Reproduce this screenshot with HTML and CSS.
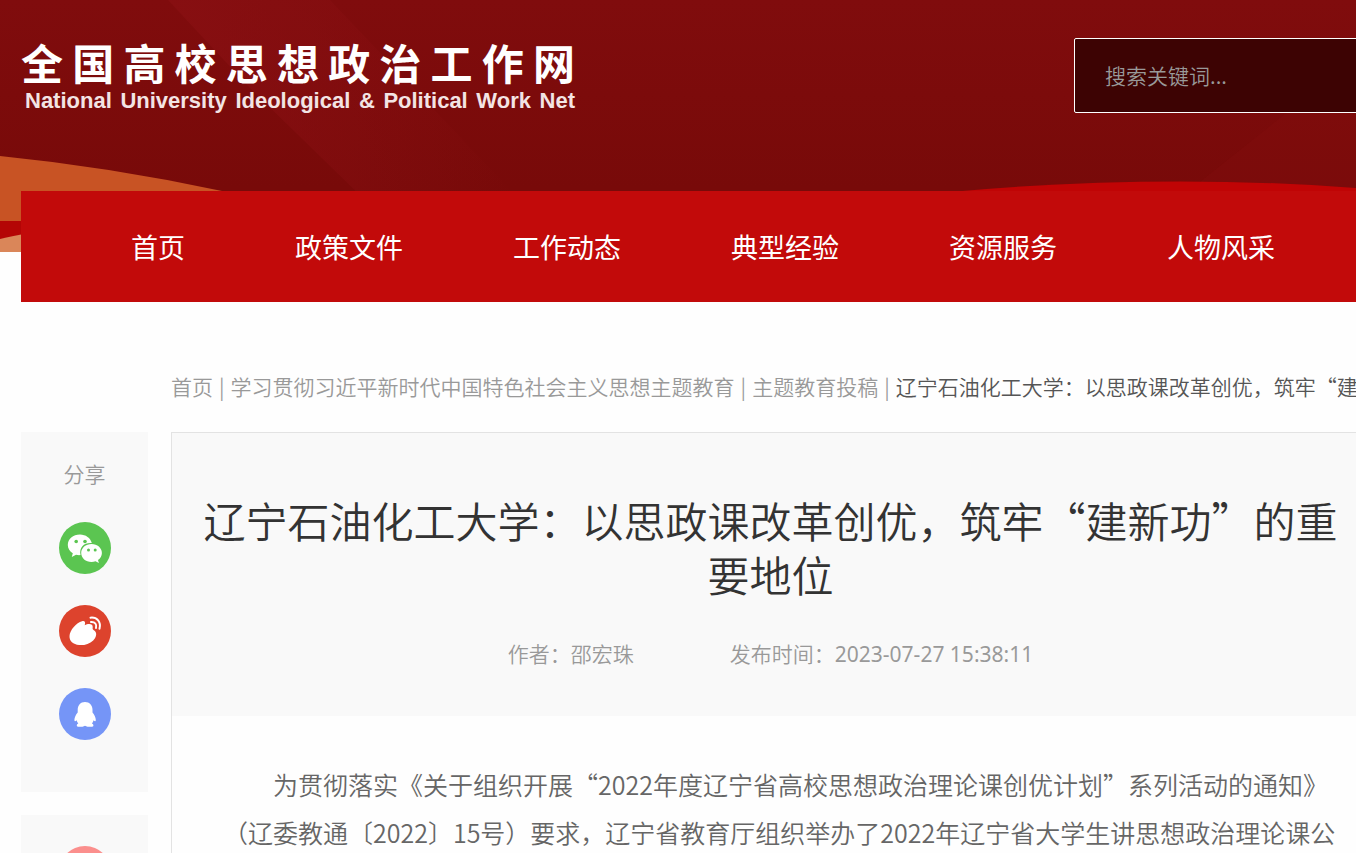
FILE: index.html
```html
<!DOCTYPE html>
<html lang="zh-CN">
<head>
<meta charset="utf-8">
<title>全国高校思想政治工作网</title>
<link rel="stylesheet" href="styles.css">
</head>
<body>
<header class="site-header">
  <svg class="banner" viewBox="0 0 1356 252" preserveAspectRatio="none" aria-hidden="true">
    <defs>
      <linearGradient id="base" x1="0" y1="0" x2="0" y2="1"><stop offset="0" stop-color="#800c0d"/><stop offset=".75" stop-color="#780a09"/></linearGradient>
      <linearGradient id="ray" x1="0" y1="0" x2="1" y2="0"><stop offset="0" stop-color="#8a1013"/><stop offset="1" stop-color="#8a1013" stop-opacity="0"/></linearGradient>
    </defs>
    <rect width="1356" height="252" fill="url(#base)"/>
    <path d="M168 0H330L520 200H365L250 88Z" fill="url(#ray)" opacity=".7"/>
    <path d="M1200 182L1290 110L1356 60V190Z" fill="#850f10" opacity=".3"/>
    <path d="M0 156Q110 167 222 191V222H0Z" fill="#c85324"/>
    <path d="M0 221H40V252H0Z" fill="#b40505"/>
    <path d="M0 239Q12 236 30 233V252H0Z" fill="#da8659"/>
    <path d="M950 192Q1160 173 1356 188V200H950Z" fill="#c00405"/>
  </svg>
  <div class="masthead">
    <a class="logo" href="#">
      <span class="logo-cn"><span>全</span><span>国</span><span>高</span><span>校</span><span>思</span><span>想</span><span>政</span><span>治</span><span>工</span><span>作</span><span>网</span></span>
      <span class="logo-en"><span>National</span> <span>University</span> <span>Ideological</span> <span>&amp;</span> <span>Political</span> <span>Work</span> <span>Net</span></span>
    </a>
    <form class="search"><input type="search" aria-label="搜索" placeholder="搜索关键词..."></form>
  </div>
  <nav class="main-nav">
    <a href="#">首页</a><a href="#">政策文件</a><a href="#">工作动态</a><a href="#">典型经验</a><a href="#">资源服务</a><a href="#">人物风采</a>
  </nav>
</header>
<main class="page">
  <nav class="crumbs"><a href="#">首页</a><span class="bar">|</span><a href="#">学习贯彻习近平新时代中国特色社会主义思想主题教育</a><span class="bar">|</span><a href="#">主题教育投稿</a><span class="bar">|</span><span class="current">辽宁石油化工大学：以思政课改革创优，筑牢“建新功”的重要地位</span></nav>
  <div class="columns">
    <aside class="side">
      <section class="share">
        <h2>分享</h2>
        <a href="#" aria-label="微信"><svg viewBox="0 0 52 52"><circle cx="26" cy="26" r="26" fill="#5bc551"/><path d="M21 12.500c-7 0-12.200 4.500-12.200 10.500 0 3.600 2 6.500 5 8.300l-1 3.600 4.200-2.200c1.500.4 3 .6 4.500.4C20 25 25 20.500 32.800 21 31.500 16 26.700 12.500 21 12.500Z" fill="#fff"/><path d="M32.500 22c-5.800 0-10.300 3.900-10.300 8.900s4.500 9 10.300 9c1.500 0 2.800-.2 4-.6l3.400 1.800-.9-3.100c2.400-1.700 3.900-4.200 3.900-7.100 0-5-4.600-8.900-10.400-8.900Z" fill="#fff"/><g fill="#5bc551"><circle cx="17.200" cy="19.500" r="1.800"/><circle cx="26" cy="19.500" r="1.800"/><circle cx="29.500" cy="28" r="1.500"/><circle cx="36.200" cy="28" r="1.500"/></g></svg></a>
        <a href="#" aria-label="微博"><svg viewBox="0 0 52 52"><circle cx="26" cy="26" r="26" fill="#dd432d"/><path d="M23 16.200c3-.8 3.700 1.300 2.700 4 3-1.500 8.500-2 8 2 .1 1-.6 2 .8 2.700 4.500 2.500 2.700 7.500-.3 10.500-3.600 3.500-9 5-14 4.600-6-.5-10-4-9.700-9 .3-6 7-13.500 12.500-14.800Z" fill="#fff"/><path d="M32 16.900c4-.3 6 2.500 5 6.200M31.500 12.700c6.500-.8 10.800 4.500 9 11" fill="none" stroke="#fff" stroke-width="2" stroke-linecap="round"/></svg></a>
        <a href="#" aria-label="QQ"><svg viewBox="0 0 52 52"><circle cx="26" cy="26" r="26" fill="#7595f7"/><path d="M26 14c-4.600 0-7.300 3.500-7.300 7.700v2.800c-1.600 2-3.300 4.700-3.300 7.500 0 1.500 1 1.500 2.200.3.300 1.300.9 2.300 1.700 3.200-1.500.8-1.800 1.700-1.300 2.700 1 1 5.500.9 8-.5 2.500 1.400 7.200 1.500 8.200.5.500-1 .2-1.900-1.300-2.700.8-.9 1.400-1.900 1.700-3.200 1.200 1.200 2.200 1.200 2.200-.3 0-2.800-1.700-5.500-3.300-7.500v-2.800c0-4.200-2.900-7.700-7.500-7.700Z" fill="#fff"/></svg></a>
      </section>
      <section class="tool"><a href="#" aria-label="收藏"><svg viewBox="0 0 52 52"><circle cx="26" cy="26" r="26" fill="#fb8f8d"/></svg></a></section>
    </aside>
    <article class="article">
      <header class="article-head">
        <h1>辽宁石油化工大学：以思政课改革创优，筑牢“建新功”的重要地位</h1>
        <p class="meta"><span>作者：邵宏珠</span><span>发布时间：<time>2023-07-27 15:38:11</time></span></p>
      </header>
      <div class="article-body">
        <p>为贯彻落实《关于组织开展“2022年度辽宁省高校思想政治理论课创优计划”系列活动的通知》（辽委教通〔2022〕15号）要求，辽宁省教育厅组织举办了2022年辽宁省大学生讲思想政治理论课公</p>
      </div>
    </article>
  </div>
</main>
</body>
</html>
```

FILE: styles.css
```css
* { box-sizing: border-box; }
body {
  margin: 0;
  height: 100vh;
  overflow: hidden;
  background: #fefefe;
  color: #999;
  font-family: "Noto Sans CJK SC", sans-serif;
  font-size: 21px;
  font-weight: 350;
}
a { color: inherit; text-decoration: none; }
h1, h2, p { margin: 0; font-weight: inherit; }

.site-header { position: relative; padding-left: 21px; }
.banner { position: absolute; top: 0; left: 0; z-index: -1; width: 100%; height: 252px; }
.masthead { display: flex; justify-content: space-between; height: 191px; padding-top: 38px; }
.logo { display: block; width: 554px; color: #fff; }
.logo-cn { display: flex; justify-content: space-between; font-size: 42px; line-height: 48px; font-weight: 700; }
.logo-en { display: flex; justify-content: space-between; padding-left: 4px; color: #f3e4e4; font: bold 22px/30px "Liberation Sans", sans-serif; white-space: nowrap; }
.search { width: 282px; height: 75px; }
.search input {
  width: 110%;
  height: 100%;
  padding: 0 30px 2px;
  border: 1px solid #fff;
  border-radius: 2px;
  background: #3d0303;
  color: #fff;
  font: inherit;
  appearance: none;
}
.search input::placeholder { color: #999; opacity: 1; }
.main-nav {
  display: flex;
  gap: 110px;
  padding-left: 110px;
  background: #c20a0a;
  color: #fff;
  font-size: 27px;
  font-weight: 400;
  line-height: 111px;
  white-space: nowrap;
}

.page { padding-left: 21px; }
.crumbs { padding: 68px 0 30px 150px; line-height: 32px; white-space: nowrap; }
.crumbs .bar { padding: 0 6px; }
.crumbs .current { color: #555; }
.columns { display: flex; gap: 23px; margin-right: -14px; }
.side { flex: none; width: 127px; }
.share { display: flex; flex-direction: column; align-items: center; gap: 31px; height: 360px; padding-top: 24px; background: #f9f9f9; }
.share h2 { font-size: 21px; line-height: 35px; }
.side svg { display: block; width: 52px; height: 52px; }
.tool { display: flex; justify-content: center; margin-top: 23px; padding: 31px 0; background: #f9f9f9; }
.article { flex: 1; border: 1px solid #e3e3e3; }
.article-head { padding: 60px 30px 45px; background: #f9f9f9; text-align: center; }
.article-head h1 { color: #333; font-size: 42px; line-height: 54px; }
.meta { display: flex; justify-content: center; gap: 96px; padding-top: 35px; line-height: 34px; }
.meta time { font-family: "Noto Sans", sans-serif; font-weight: 400; }
.article-body { padding: 44px 20px 46px 51px; color: #666; font-size: 25px; line-height: 48px; }
.article-body p { text-indent: 2em; }
```
